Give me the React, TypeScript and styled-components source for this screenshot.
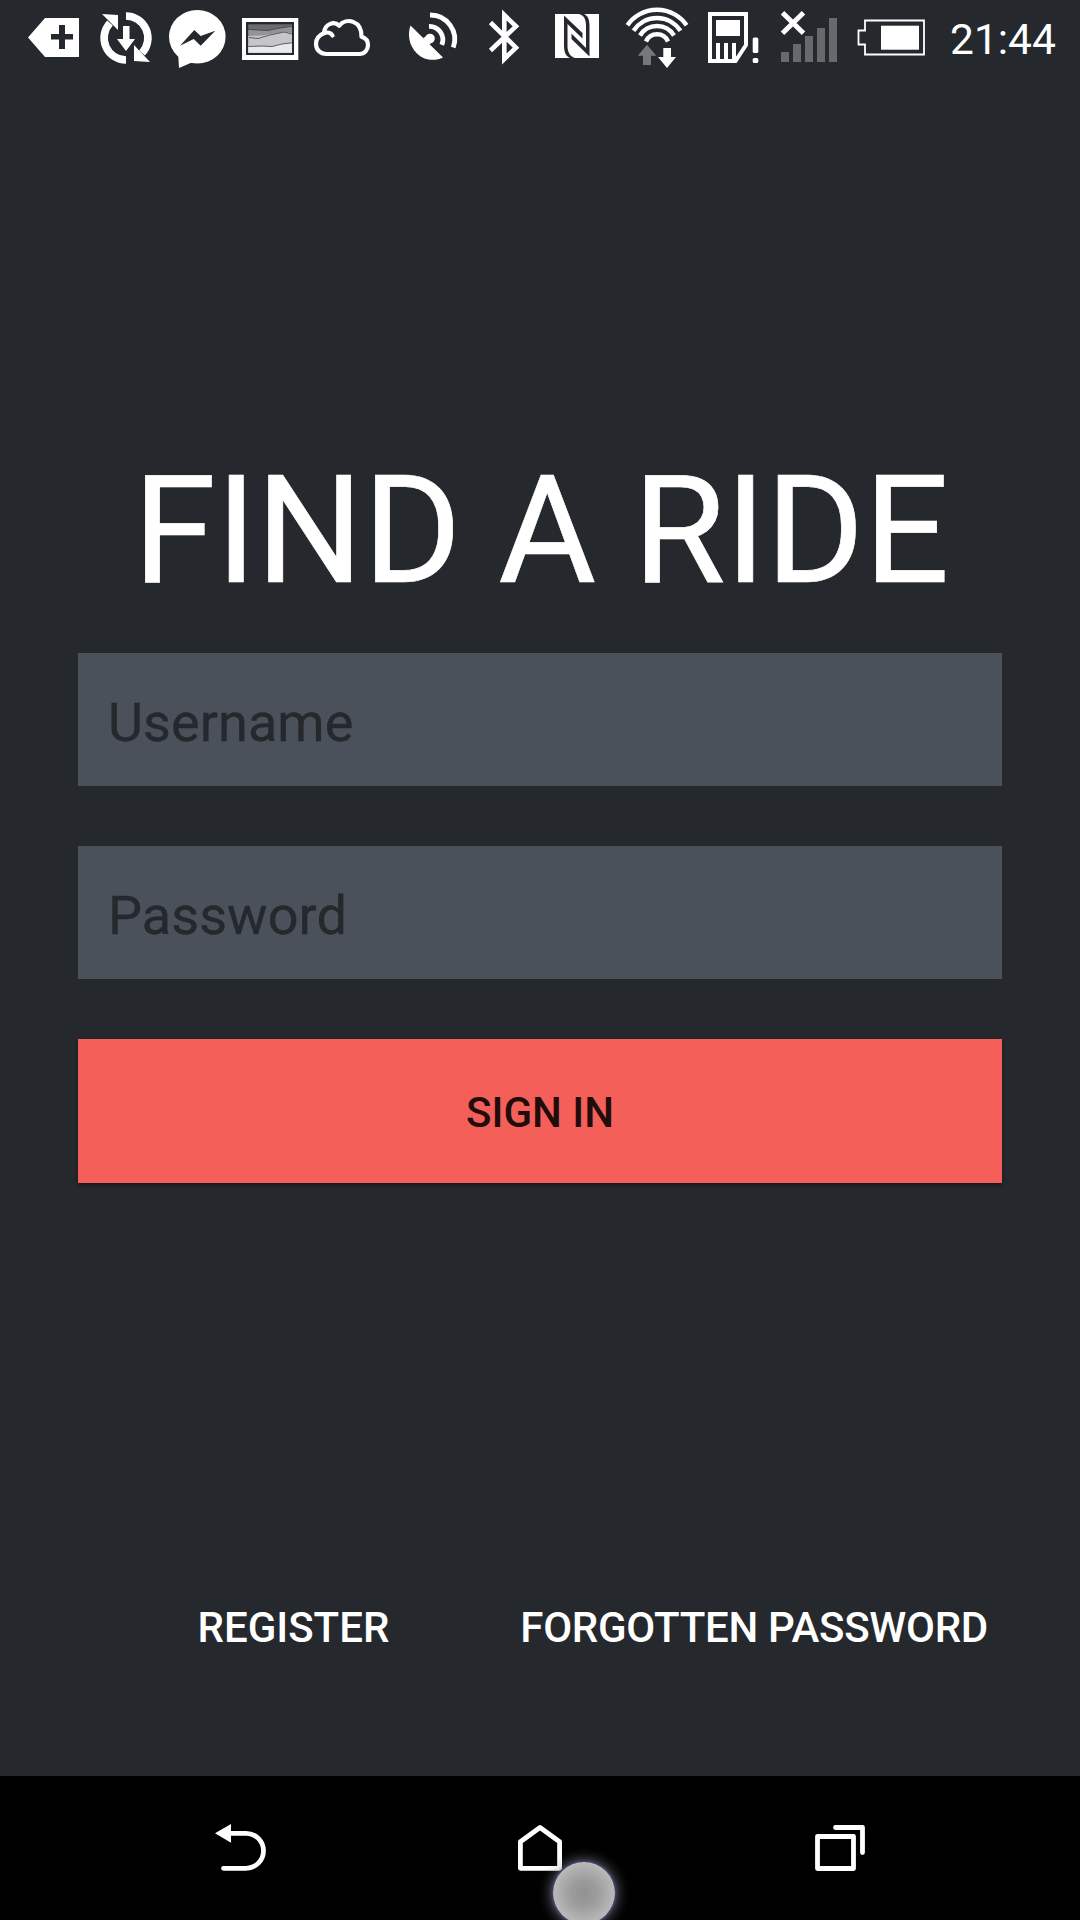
import React from "react";
import styled, { createGlobalStyle } from "styled-components";

const BG = "#25282d";

const GlobalStyle = createGlobalStyle`
  * { box-sizing: border-box; }
  body { margin: 0; background: ${BG}; font-family: Roboto, "Liberation Sans", sans-serif; }
`;

const Screen = styled.div`
  display: flex;
  flex-direction: column;
  width: 1080px;
  height: 1920px;
  overflow: hidden;
  background: ${BG};
  color: #fff;
`;

const StatusBar = styled.header`
  display: flex;
  height: 75px;
  padding-left: 24px;
`;

const Glyph = styled.svg`
  display: block;
  flex: none;
`;

const Clock = styled.time`
  margin-left: 20px;
  padding-top: 3px;
  font-size: 42.5px;
  line-height: 74px;
  white-space: nowrap;
`;

const Main = styled.main`
  flex: 1;
  display: flex;
  flex-direction: column;
  padding: 368px 78px 0;
`;

const Title = styled.h1`
  margin: 0 0 34px;
  padding-left: 2px;
  font-size: 150px;
  font-weight: 400;
  line-height: 176px;
  letter-spacing: -0.2px;
  -webkit-text-stroke: 0.7px #fff;
  text-align: center;
  white-space: nowrap;
`;

const Form = styled.form`
  display: flex;
  flex-direction: column;
  gap: 60px;
`;

const Field = styled.label`
  display: flex;
  align-items: center;
  height: 133px;
  padding: 6px 30px 0;
  background: #4b515a;
  color: ${BG};
  font-size: 54px;
  line-height: 64px;
  letter-spacing: 0.05px;
  -webkit-text-stroke: 0.3px ${BG};
`;

const SignInButton = styled.button`
  height: 144px;
  padding: 3px 0 0;
  border: 0;
  background: #f45f59;
  box-shadow: 0 2px 4px rgba(0, 0, 0, 0.4);
  color: #1f0c0b;
  font: 500 42px/50px Roboto, "Liberation Sans", sans-serif;
`;

const Links = styled.nav`
  display: flex;
  justify-content: flex-end;
  gap: 131px;
  margin-top: 420px;
  padding-right: 14px;
`;

const LinkButton = styled.button<{ $tracking?: number }>`
  padding: 0;
  border: 0;
  background: none;
  color: #fff;
  font: 500 42px/50px Roboto, "Liberation Sans", sans-serif;
  letter-spacing: ${(p) => p.$tracking ?? 0}px;
  white-space: nowrap;
`;

const NavBar = styled.footer`
  position: relative;
  display: flex;
  justify-content: center;
  height: 144px;
  background: #000;
`;

const TouchDot = styled.div`
  position: absolute;
  left: 553px;
  top: 86px;
  width: 62px;
  height: 62px;
  border-radius: 50%;
  background: radial-gradient(circle, #929292 0%, #9c9c9c 30%, #b9b9b9 70%);
  box-shadow: 0 0 3px 1px #46508c, 0 0 12px 4px rgba(150, 150, 165, 0.5);
`;

type IconProps = { x: number; w: number; y?: number; h?: number; children: React.ReactNode };

/* Each icon owns a horizontal slot of its bar and draws in the bar's coordinates. */
const Icon = ({ x, w, y = 0, h = 75, children }: IconProps) => (
  <Glyph width={w} height={h} viewBox={`${x} ${y} ${w} ${h}`} fill="#fff">
    {children}
  </Glyph>
);

const line = (width: number) => ({
  fill: "none",
  stroke: "#fff",
  strokeWidth: width,
});

const SIGNAL = [
  [781, 52],
  [793, 44],
  [805, 36],
  [817, 28],
  [829, 18],
];

export default function App() {
  return (
    <>
      <GlobalStyle />
      <Screen>
        <StatusBar>
          <Icon x={24} w={66}>
            <path fillRule="evenodd" d="M28 37.5 45 18H79V57H45ZM59 25V34H51V39.5H59V49H65V39.5H73V34H65V25Z" />
          </Icon>
          <Icon x={90} w={70}>
            <path {...line(7.6)} d="M126 16A22 22 0 0 1 142 53M126 60A22 22 0 0 1 110 23" />
            <path d="M102 14 118 15V30ZM134 45V61L150 62ZM123 26H129.5V39H135L126 51 117 39H123Z" />
          </Icon>
          <Icon x={160} w={74}>
            <ellipse cx="197.3" cy="36.8" rx="28.3" ry="26.8" />
            <path d="M178 52 179 68 193 62Z" />
            <path fill={BG} d="M180 45.7 194.3 30 200.7 36 215.3 30.7 200.7 45.7 193.7 39Z" />
          </Icon>
          <Icon x={234} w={72}>
            <rect x="242" y="18" width="56.3" height="42" />
            <rect x="246" y="22" width="48" height="33" fill={BG} />
            <rect x="248.3" y="24.3" width="43.7" height="28.4" fill="#6c6c6e" />
            <path fill="#949496" d="M248.3 29.5 258 30 268 30.5 280 28 292 26.3V52.7H248.3Z" />
            <path fill="#c6c6c8" d="M248.3 36 262 35.5 278 33 284 31.5 292 33V52.7H248.3Z" />
            <path fill="#e9e9eb" d="M248.3 46.5 262 46 272 46.5 282 44 292 42.8V52.7H248.3Z" />
            <path fill="none" stroke="#3d3f43" strokeWidth="0.8" d="M248.3 29.5 258 30 268 30.5 280 28 292 26.3M249 37.5 258 38.5 270 35 284 32 292 34M248.3 46.5 262 46 272 46.5 282 44 292 42.8" />
          </Icon>
          <Icon x={306} w={94}>
            <path {...line(4.2)} strokeLinecap="round" strokeLinejoin="round" d="M326.5 54C320 54 316 49.500 316 44 316 38.500 319.500 35 323.8 33.300 325 23 334.500 21 339.200 25.800 346 17 362 20.500 361.500 36.800 365.500 38 368 40.500 368 45 368 50 364.500 54 359.500 54ZM323.800 33.300C327.500 31.800 331 32.700 332.500 35.500" />
          </Icon>
          <Icon x={400} w={76}>
            <path d="M410.5 25.5 443 57.5C436 60.800 425 61.500 417 53.500 408.500 45 407.500 34 410.500 25.500Z" />
            <circle cx="430" cy="38.500" r="4.8" />
            <path d="M423 38 429 45 432 42 427 36Z" />
            <path {...line(4.8)} d="M430 15A24.4 24.4 0 0 1 453.300 47.500M429 26.300A13.400 13.400 0 0 1 441.800 44.800" />
          </Icon>
          <Icon x={476} w={70}>
            <path {...line(4.6)} d="M490.500 22.500 516 47.700 504.300 59V15L516 26.300 490.500 50.500" />
          </Icon>
          <Icon x={546} w={70}>
            <rect x="555" y="14" width="44" height="44" />
            <path fill={BG} d="M564 15.500 582.500 33V38.500L567.500 24V46C567.500 52 570 56.500 575 58H570C566 56.500 564 52 564 46Z" />
            <path fill={BG} d="M589.500 56.500 571.500 39V33.500L586 48V26C586 20 584.500 15.500 579 14H584C588 15.500 589.500 20 589.500 26Z" />
          </Icon>
          <Icon x={616} w={84}>
            <path {...line(4.4)} d="M627.400 25.300A36 36 0 0 1 686.600 25.300M633.500 30.800A28 28 0 0 1 680.500 30.800M640 35.500A20 20 0 0 1 674 35.500M646 41.500A12 12 0 0 1 668 41.500" />
            <path fill="#76777a" d="M637.700 55.700 647 44.700 656.300 55.700H651V65H643V55.700Z" />
            <path d="M663.300 48H671V57H676L667 68 658 57H663.300Z" />
          </Icon>
          <Icon x={700} w={70}>
            <path {...line(4)} d="M710 14H746V45L735.500 61H710Z" />
            <path d="M716 20H740V36H716ZM716 43H720V61H716ZM724 43H728V61H724ZM732 43H736V59H732Z" />
            <rect x="752.700" y="37.500" width="5.600" height="15.500" rx="1.500" />
            <rect x="752.700" y="58" width="5.600" height="5" rx="1.500" />
          </Icon>
          <Icon x={770} w={76}>
            {SIGNAL.map(([x, y]) => (
              <rect key={x} x={x} y={y} width="8" height={62 - y} fill="#68696d" />
            ))}
            <path {...line(5)} d="M782.500 12.800 803.500 33.300M803.500 12.800 782.500 33.300" />
          </Icon>
          <Icon x={846} w={84}>
            <path {...line(1.8)} d="M865 20.500H924V54.500H865V44.500H858.500V30.500H865Z" />
            <rect x="881" y="25.700" width="38" height="24" />
          </Icon>
          <Clock>21:44</Clock>
        </StatusBar>
        <Main>
          <Title>FIND A RIDE</Title>
          <Form onSubmit={(e) => e.preventDefault()}>
            <Field>Username</Field>
            <Field>Password</Field>
            <SignInButton>SIGN IN</SignInButton>
          </Form>
          <Links>
            <LinkButton>REGISTER</LinkButton>
            <LinkButton $tracking={-0.28}>FORGOTTEN PASSWORD</LinkButton>
          </Links>
        </Main>
        <NavBar>
          <Icon x={90} w={300} y={1776} h={144}>
            <path d="M215 1833.300 231 1824V1842.700Z" />
            <path {...line(4.8)} strokeLinecap="round" d="M230 1833.300H246A17.500 17.500 0 0 1 246 1868.300H223.500" />
          </Icon>
          <Icon x={390} w={300} y={1776} h={144}>
            <path {...line(4.8)} strokeLinejoin="round" d="M520.400 1841.700 540 1827.500 559.600 1841.700V1868.300H520.400Z" />
          </Icon>
          <Icon x={690} w={300} y={1776} h={144}>
            <path {...line(4.8)} strokeLinejoin="round" strokeLinecap="round" d="M817.500 1836.500H853.500V1868.500H817.500ZM835.500 1827.500H862.500V1852.500" />
          </Icon>
          <TouchDot />
        </NavBar>
      </Screen>
    </>
  );
}
